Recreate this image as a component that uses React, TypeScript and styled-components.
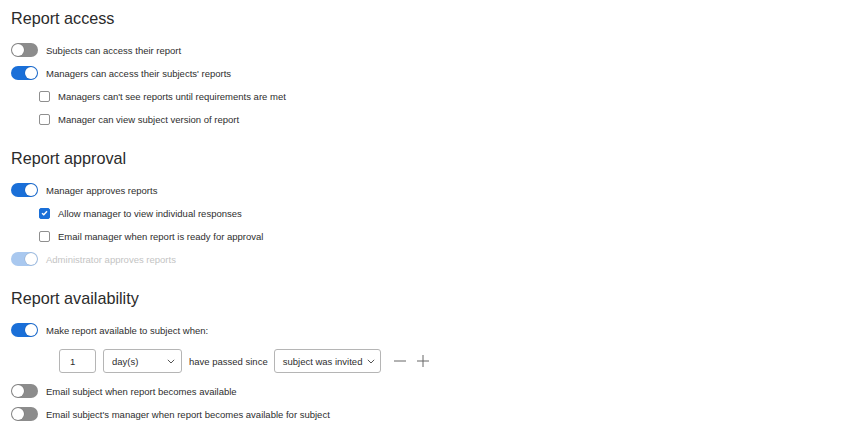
import styled, { createGlobalStyle } from "styled-components";

const GlobalStyle = createGlobalStyle`
  body {
    margin: 0;
    background: #ffffff;
    font-family: "Liberation Sans", Arial, sans-serif;
    color: #333333;
  }
`;

const Page = styled.div`
  display: flex;
  flex-direction: column;
  padding: 8px 0 0 11px;
`;

const Section = styled.section`
  display: flex;
  flex-direction: column;
  & + & {
    margin-top: 17.5px;
  }
`;

const Heading = styled.h2`
  margin: 0 0 10.5px;
  font-size: 16.2px;
  line-height: 20px;
  font-weight: 400;
  color: #2b2b2b;
`;

const Row = styled.div<{ $indent?: boolean; $disabled?: boolean }>`
  display: flex;
  align-items: center;
  height: 23px;
  gap: 8px;
  padding-left: ${(p) => (p.$indent ? "28px" : "0")};
  font-size: 9.5px;
  color: ${(p) => (p.$disabled ? "#c4c4c4" : "#2e2e2e")};
`;

const Track = styled.span<{ $on: boolean; $disabled?: boolean }>`
  position: relative;
  box-sizing: border-box;
  width: 27px;
  height: 14px;
  border-radius: 7px;
  flex-shrink: 0;
  background: ${(p) =>
    p.$disabled ? "#a9c8ef" : p.$on ? "#1a6fd8" : "#8c8c8c"};
`;

const Knob = styled.span<{ $on: boolean }>`
  position: absolute;
  top: 1px;
  left: ${(p) => (p.$on ? "14px" : "1px")};
  width: 12px;
  height: 12px;
  border-radius: 50%;
  background: #ffffff;
  box-shadow: 0 0 0 0.5px rgba(0, 0, 0, 0.15);
`;

const Box = styled.span<{ $checked?: boolean }>`
  box-sizing: border-box;
  width: 11px;
  height: 11px;
  border-radius: 2px;
  flex-shrink: 0;
  border: 1px solid ${(p) => (p.$checked ? "#1a6fd8" : "#8f8f8f")};
  background: ${(p) => (p.$checked ? "#1a6fd8" : "#ffffff")};
  display: flex;
  align-items: center;
  justify-content: center;
`;

const Controls = styled.div`
  display: flex;
  align-items: center;
  height: 24px;
  margin: 7.5px 0 6.5px 48px;
  font-size: 9.5px;
  color: #2e2e2e;
`;

const NumberField = styled.div`
  box-sizing: border-box;
  width: 37px;
  height: 24px;
  border: 1px solid #b5b5b5;
  border-radius: 3px;
  display: flex;
  align-items: center;
  padding-left: 10px;
`;

const Select = styled.div<{ $width: number; $pad: number }>`
  box-sizing: border-box;
  width: ${(p) => p.$width}px;
  height: 24px;
  border: 1px solid #b5b5b5;
  border-radius: 3px;
  display: flex;
  align-items: center;
  justify-content: space-between;
  padding: 0 ${(p) => p.$pad}px 0 8px;
  margin-left: 7px;
`;

const Label = styled.span`
  margin-left: 7px;
  margin-right: -1px;
`;

const IconButton = styled.span<{ $first?: boolean }>`
  display: flex;
  margin-left: ${(p) => (p.$first ? "13px" : "11px")};
`;

function Toggle({ on, disabled }: { on: boolean; disabled?: boolean }) {
  return (
    <Track $on={on} $disabled={disabled}>
      <Knob $on={on} />
    </Track>
  );
}

function Check({ checked }: { checked?: boolean }) {
  return (
    <Box $checked={checked}>
      {checked && (
        <svg width="7" height="6" viewBox="0 0 7 6">
          <path d="M1 3.2 L2.8 4.8 L6 1.2" fill="none" stroke="#fff" strokeWidth="1.4" />
        </svg>
      )}
    </Box>
  );
}

function Chevron() {
  return (
    <svg width="8" height="5" viewBox="0 0 8 5">
      <path d="M0.8 0.8 L4 4 L7.2 0.8" fill="none" stroke="#555" strokeWidth="1" />
    </svg>
  );
}

export default function App() {
  return (
    <Page>
      <GlobalStyle />
      <Section>
        <Heading>Report access</Heading>
        <Row>
          <Toggle on={false} />
          Subjects can access their report
        </Row>
        <Row>
          <Toggle on />
          Managers can access their subjects' reports
        </Row>
        <Row $indent>
          <Check />
          Managers can't see reports until requirements are met
        </Row>
        <Row $indent>
          <Check />
          Manager can view subject version of report
        </Row>
      </Section>

      <Section>
        <Heading>Report approval</Heading>
        <Row>
          <Toggle on />
          Manager approves reports
        </Row>
        <Row $indent>
          <Check checked />
          Allow manager to view individual responses
        </Row>
        <Row $indent>
          <Check />
          Email manager when report is ready for approval
        </Row>
        <Row $disabled>
          <Toggle on disabled />
          Administrator approves reports
        </Row>
      </Section>

      <Section>
        <Heading>Report availability</Heading>
        <Row>
          <Toggle on />
          Make report available to subject when:
        </Row>
        <Controls>
          <NumberField>1</NumberField>
          <Select $width={79} $pad={6}>
            day(s)
            <Chevron />
          </Select>
          <Label>have passed since</Label>
          <Select $width={107} $pad={5}>
            subject was invited
            <Chevron />
          </Select>
          <IconButton $first>
            <svg width="12" height="12" viewBox="0 0 12 12">
              <path d="M0 6 H12" stroke="#666" strokeWidth="1" />
            </svg>
          </IconButton>
          <IconButton>
            <svg width="12" height="12" viewBox="0 0 12 12">
              <path d="M0 6 H12 M6 0 V12" stroke="#666" strokeWidth="1" />
            </svg>
          </IconButton>
        </Controls>
        <Row>
          <Toggle on={false} />
          Email subject when report becomes available
        </Row>
        <Row>
          <Toggle on={false} />
          Email subject's manager when report becomes available for subject
        </Row>
      </Section>
    </Page>
  );
}
